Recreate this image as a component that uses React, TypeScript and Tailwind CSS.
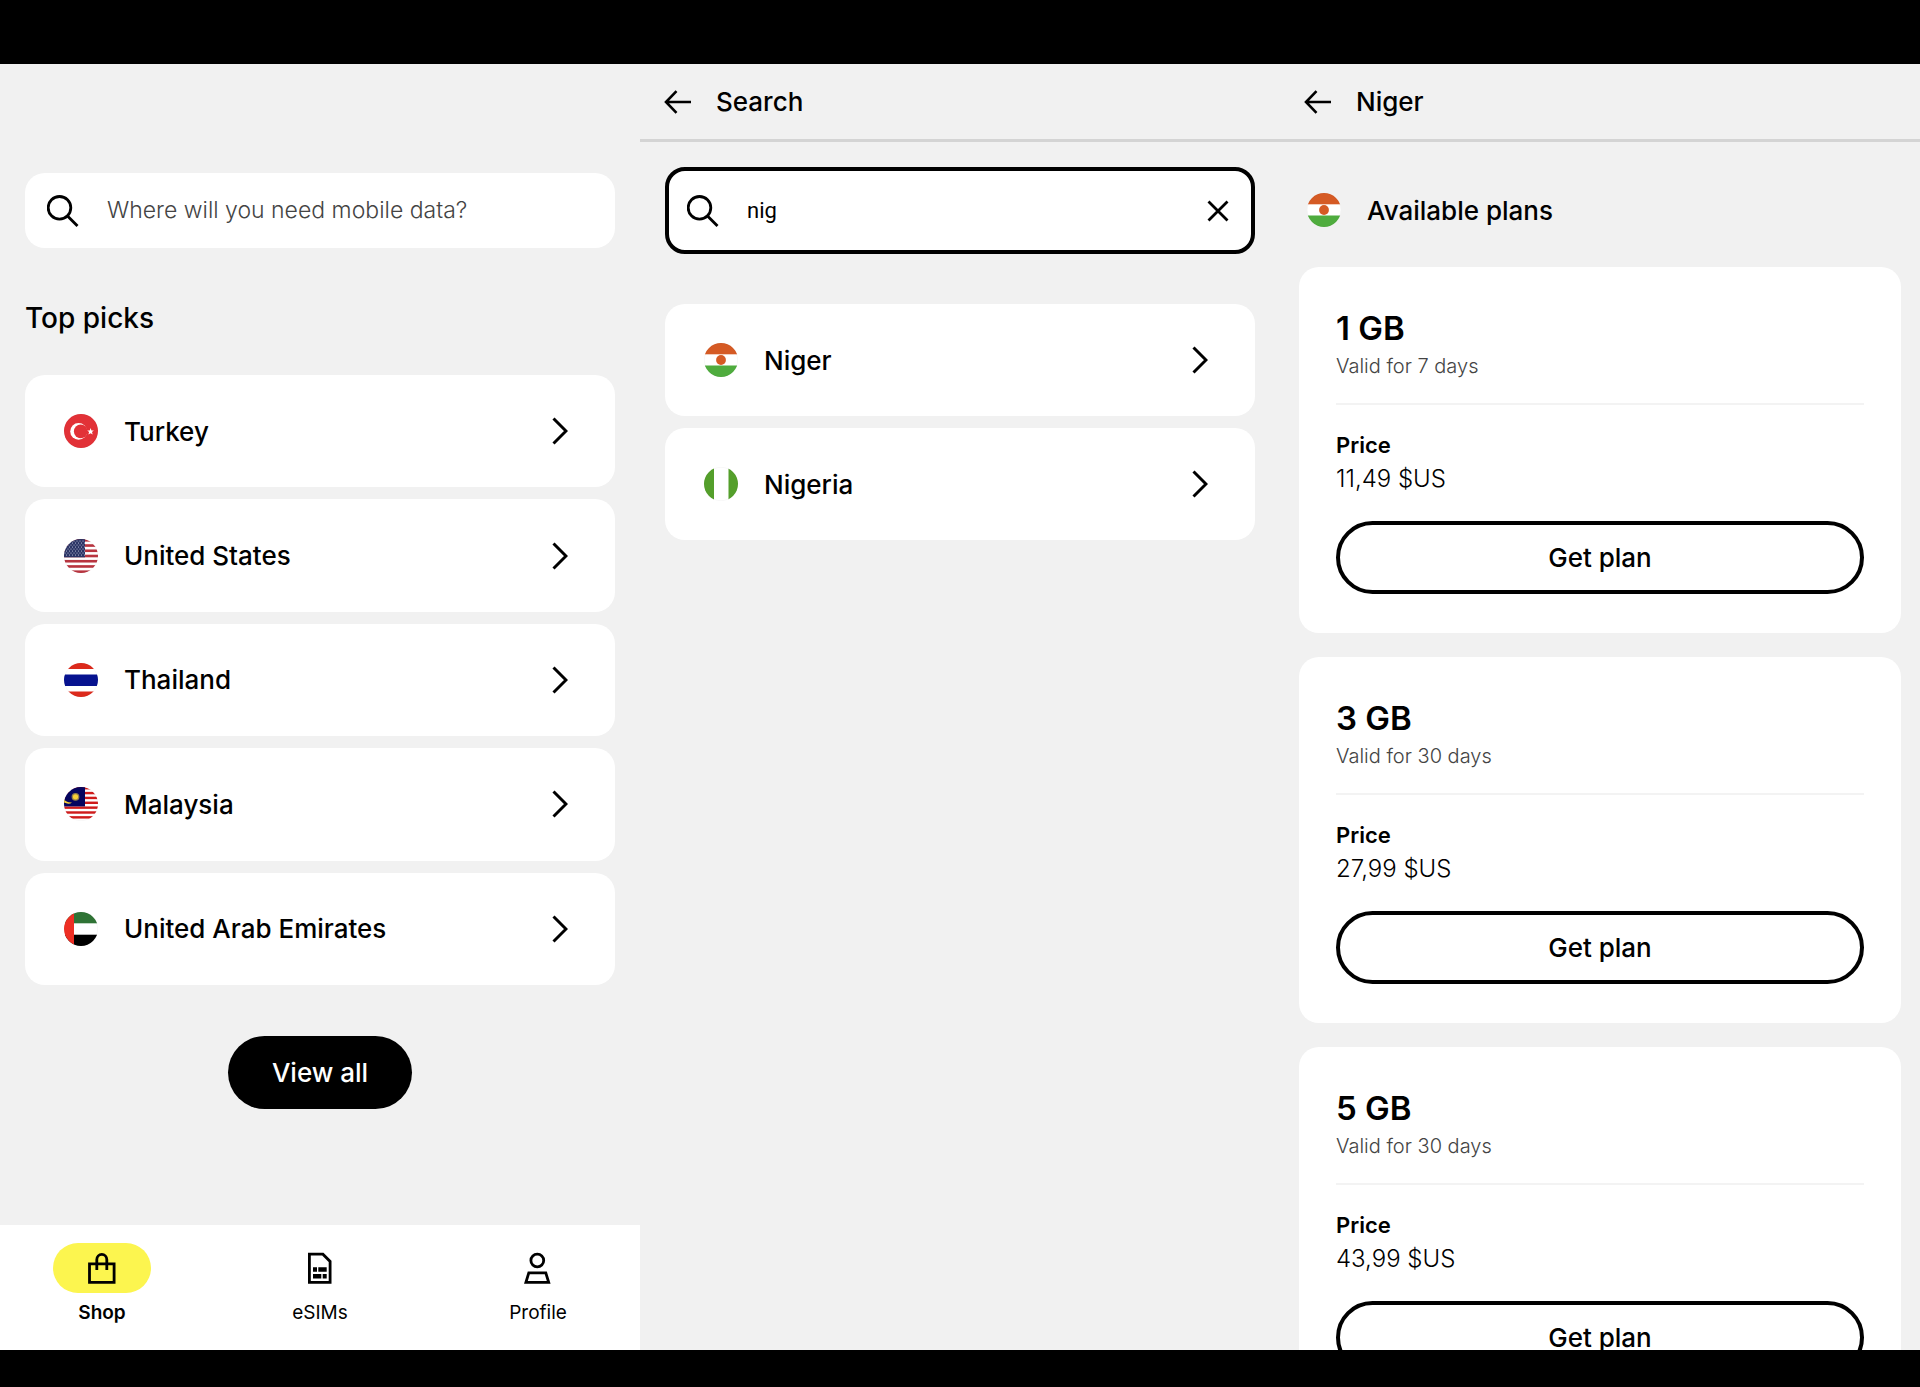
import { useId, useState } from 'react'
import type { ReactNode } from 'react'

type Country = 'tr' | 'us' | 'th' | 'my' | 'ae' | 'ne' | 'ng'

const topPicks: { code: Country; name: string }[] = [
  { code: 'tr', name: 'Turkey' },
  { code: 'us', name: 'United States' },
  { code: 'th', name: 'Thailand' },
  { code: 'my', name: 'Malaysia' },
  { code: 'ae', name: 'United Arab Emirates' },
]

const results: { code: Country; name: string }[] = [
  { code: 'ne', name: 'Niger' },
  { code: 'ng', name: 'Nigeria' },
]

const plans = [
  { size: '1 GB', validity: 'Valid for 7 days', price: '11,49 $US' },
  { size: '3 GB', validity: 'Valid for 30 days', price: '27,99 $US' },
  { size: '5 GB', validity: 'Valid for 30 days', price: '43,99 $US' },
]

const starRows = [2, 4, 6, 8, 10, 12, 14, 16]
const starCols = [1, 4, 7, 10, 13, 16, 19]

const flags: Record<Country, ReactNode> = {
  tr: (
    <>
      <rect width="34" height="34" fill="#e23137" />
      <circle cx="14.6" cy="17.4" r="8.4" fill="#fff" />
      <circle cx="16.7" cy="17.4" r="6.8" fill="#e23137" />
      <path d="M26.6 14l.9 2.4 2.4.1-1.9 1.6.7 2.5-2.1-1.4-2.2 1.4.7-2.5-1.9-1.6 2.5-.1z" fill="#fff" />
    </>
  ),
  us: (
    <>
      <rect width="34" height="34" fill="#fff" />
      {[0, 2, 4, 6, 8, 10, 12].map((i) => (
        <rect key={i} y={(i * 34) / 13} width="34" height={34 / 13} fill="#b8343f" />
      ))}
      <rect width="21" height="18.3" fill="#2c3566" />
      {starRows.map((y, r) =>
        starCols.map((x) => (
          <circle key={`${x}-${y}`} cx={x + (r % 2 ? 1.5 : 0)} cy={y} r="0.55" fill="#c9cde0" />
        )),
      )}
    </>
  ),
  th: (
    <>
      <rect width="34" height="34" fill="#fff" />
      <rect width="34" height="6" fill="#dc2a1c" />
      <rect y="11.5" width="34" height="11.5" fill="#06128f" />
      <rect y="28.5" width="34" height="5.5" fill="#dc2a1c" />
    </>
  ),
  my: (
    <>
      <rect width="34" height="34" fill="#fff" />
      {[0, 2, 4, 6, 8, 10, 12].map((i) => (
        <rect key={i} y={(i * 34) / 14} width="34" height={34 / 14} fill="#cf1b1b" />
      ))}
      <rect width="21" height="19.4" fill="#05055f" />
      <path d="M0 12Q2 15.8 8 15.4Q5 17.8 0 15.5z" fill="#f7d038" />
      <circle cx="11.5" cy="9.8" r="3.9" fill="#f7d038" fillOpacity="0.6" />
      <circle cx="11.5" cy="9.8" r="2.6" fill="#f7d038" />
    </>
  ),
  ae: (
    <>
      <rect width="34" height="34" fill="#fff" />
      <rect width="34" height="11.3" fill="#2f7335" />
      <rect y="22.7" width="34" height="11.3" fill="#000" />
      <rect width="10" height="34" fill="#ee2f24" />
    </>
  ),
  ne: (
    <>
      <rect width="34" height="34" fill="#fff" />
      <rect width="34" height="11.3" fill="#d55a24" />
      <rect y="22.5" width="34" height="11.5" fill="#4fac3e" />
      <circle cx="17" cy="17" r="4.9" fill="#d55a24" />
    </>
  ),
  ng: (
    <>
      <rect width="34" height="34" fill="#fff" />
      <rect width="10" height="34" fill="#549f2b" />
      <rect x="24.5" width="9.5" height="34" fill="#549f2b" />
    </>
  ),
}

function Flag({ code }: { code: Country }) {
  const id = useId()
  return (
    <svg viewBox="0 0 34 34" className="size-[34px] shrink-0" aria-hidden="true">
      <clipPath id={id}>
        <circle cx="17" cy="17" r="17" />
      </clipPath>
      <g clipPath={`url(#${id})`}>{flags[code]}</g>
      <circle cx="17" cy="17" r="16.7" fill="none" stroke="#000" strokeOpacity="0.06" strokeWidth="0.6" />
    </svg>
  )
}

function SearchIcon() {
  return (
    <svg viewBox="0 0 32 32" className="size-8 shrink-0" fill="none" stroke="#000" strokeWidth="2.8" aria-hidden="true">
      <circle cx="12.5" cy="12.8" r="11.3" />
      <path d="M20.5 21l10 10" />
    </svg>
  )
}

function ChevronIcon() {
  return (
    <svg viewBox="0 0 16 28" className="h-7 w-4 shrink-0" fill="none" stroke="#000" strokeWidth="3" aria-hidden="true">
      <path d="M1.5 1.5L14 14L1.5 26.5" />
    </svg>
  )
}

function BackIcon() {
  return (
    <svg viewBox="0 0 28 24" className="h-6 w-7" fill="none" stroke="#000" strokeWidth="2.6" aria-hidden="true">
      <path d="M12.5 1.2L2 12l10.5 10.8M2 12h25" />
    </svg>
  )
}

function ScreenHeader({ title }: { title: string }) {
  return (
    <header className="flex h-[78px] shrink-0 items-center gap-6 border-b-3 border-[#d4d4d4] px-6">
      <button type="button" aria-label="Back">
        <BackIcon />
      </button>
      <h1 className="text-[26px] font-medium">{title}</h1>
    </header>
  )
}

function CountryRow({ code, name }: { code: Country; name: string }) {
  return (
    <li className="flex">
      <a href={`#${code}`} className="flex min-h-28 flex-1 items-center rounded-[20px] bg-white pr-[47px] pl-[39px]">
        <Flag code={code} />
        <span className="ml-[26px] flex-1 text-[26px] font-medium">{name}</span>
        <ChevronIcon />
      </a>
    </li>
  )
}

function PlanCard({ size, validity, price }: { size: string; validity: string; price: string }) {
  return (
    <article className="rounded-[20px] bg-white px-[37px] pt-[41px] pb-[39px]">
      <h3 className="text-[33px] leading-10 font-semibold">{size}</h3>
      <p className="mt-1 text-[20px] leading-7 font-light text-[#444]">{validity}</p>
      <hr className="mt-[23px] border-t-2 border-[#f3f3f3]" />
      <p className="mt-6 text-[22px] leading-8 font-semibold">Price</p>
      <p className="text-2xl leading-9 font-light">{price}</p>
      <button type="button" className="mt-6 h-[73px] w-full rounded-full border-4 border-black text-[26px] font-medium">
        Get plan
      </button>
    </article>
  )
}

function ShopScreen() {
  return (
    <section className="flex min-h-0 flex-col">
      <div className="px-[25px] pt-[109px]">
        <label className="flex h-[75px] items-center gap-7 rounded-[20px] bg-white px-[22px]">
          <SearchIcon />
          <input
            type="search"
            aria-label="Search destinations"
            placeholder="Where will you need mobile data?"
            className="min-w-0 flex-1 bg-transparent text-[23px] font-light outline-none placeholder:text-[#444]"
          />
        </label>
        <h2 className="mt-[50px] text-[28px] leading-10 font-medium">Top picks</h2>
        <ul className="mt-[37px] grid min-h-[610px] auto-rows-fr gap-3">
          {topPicks.map((c) => (
            <CountryRow key={c.code} {...c} />
          ))}
        </ul>
        <div className="mt-[51px] flex justify-center">
          <button type="button" className="h-[73px] rounded-full bg-black px-11 text-[26px] font-medium text-white">
            View all
          </button>
        </div>
      </div>
      <nav className="mt-auto flex h-[125px] items-start justify-between bg-white px-[53px] pt-[18px] text-[19px]">
        <a href="#shop" aria-current="page" className="flex w-[98px] flex-col items-center gap-1.5 font-semibold">
          <span className="flex h-[50px] w-full items-center justify-center rounded-full bg-[#fcf54f]">
            <svg viewBox="0 0 28 32" className="h-8 w-7" fill="none" stroke="#000" strokeWidth="2.8" aria-hidden="true">
              <path d="M1.5 11.8h24.6v18.6H1.5zM8.8 18V7.6a5 5.2 0 0 1 10 0V18" />
            </svg>
          </span>
          Shop
        </a>
        <a href="#esims" className="flex w-[98px] flex-col items-center gap-1.5">
          <span className="flex h-[50px] items-center">
            <svg viewBox="0 0 24 32" className="h-8 w-6" aria-hidden="true">
              <path d="M1.4 2.2h13.5l7.2 7.2v21H1.4z" fill="none" stroke="#000" strokeWidth="2.8" />
              <path d="M5 15.3h4v4.4H5zM10.3 15.3h8.4v4.4h-8.4zM5 22h8.3v4.6H5zM14.7 22h4v4.6h-4z" />
            </svg>
          </span>
          eSIMs
        </a>
        <a href="#profile" className="flex w-[98px] flex-col items-center gap-1.5">
          <span className="flex h-[50px] items-center">
            <svg viewBox="0 0 28 32" className="h-8 w-7" fill="none" stroke="#000" strokeWidth="2.8" aria-hidden="true">
              <circle cx="13.3" cy="8.5" r="6.4" />
              <path d="M4.8 20.8h17l2.9 9.6H1.9z" />
            </svg>
          </span>
          Profile
        </a>
      </nav>
    </section>
  )
}

function SearchScreen() {
  const [query, setQuery] = useState('nig')
  return (
    <section className="flex min-h-0 flex-col">
      <ScreenHeader title="Search" />
      <div className="px-[25px] pt-[25px]">
        <div className="flex h-[87px] items-center gap-7 rounded-[20px] border-4 border-black bg-white pr-[22px] pl-[18px]">
          <SearchIcon />
          <input
            type="text"
            aria-label="Search destinations"
            value={query}
            onChange={(e) => setQuery(e.target.value)}
            className="min-w-0 flex-1 bg-transparent font-[Roboto,sans-serif] text-[22px] outline-none"
          />
          <button type="button" aria-label="Clear" onClick={() => setQuery('')}>
            <svg viewBox="0 0 22 22" className="size-[22px]" fill="none" stroke="#000" strokeWidth="2.8" aria-hidden="true">
              <path d="M1.5 1.5l19 19M20.5 1.5l-19 19" />
            </svg>
          </button>
        </div>
        <ul className="mt-[50px] grid gap-3">
          {results.map((c) => (
            <CountryRow key={c.code} {...c} />
          ))}
        </ul>
      </div>
    </section>
  )
}

function PlansScreen() {
  return (
    <section className="flex min-h-0 flex-col overflow-hidden">
      <ScreenHeader title="Niger" />
      <div className="px-[19px] pt-12">
        <div className="flex h-10 items-center gap-[26px] px-2">
          <Flag code="ne" />
          <h2 className="text-[26px] font-medium">Available plans</h2>
        </div>
        <div className="mt-[37px] grid gap-6">
          {plans.map((p) => (
            <PlanCard key={p.size} {...p} />
          ))}
        </div>
      </div>
    </section>
  )
}

export default function App() {
  return (
    <div className="flex h-screen flex-col bg-black pt-16 pb-[37px] font-[Inter,sans-serif] text-black">
      <main className="grid min-h-0 flex-1 grid-cols-3 grid-rows-[minmax(0,1fr)] overflow-hidden bg-[#f1f1f1]">
        <ShopScreen />
        <SearchScreen />
        <PlansScreen />
      </main>
    </div>
  )
}
